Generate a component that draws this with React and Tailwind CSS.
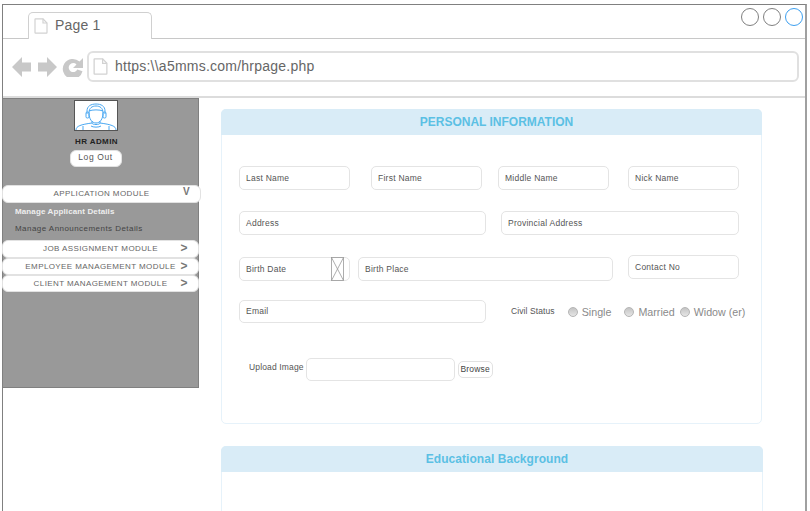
import React from 'react';

function PageIcon({ className }) {
  return (
    <svg className={className} viewBox="0 0 14 16" fill="none" stroke="#d2d2d2" strokeWidth="1.2">
      <path d="M1 1.2c0-.2.2-.4.4-.4H9L13 5v9.6c0 .3-.2.6-.5.6H1.500c-.3 0-.5-.3-.5-.6z" />
      <path d="M9 .8V5h4" />
    </svg>
  );
}

function Avatar() {
  return (
    <svg className="h-full w-full" viewBox="0 0 42 29" fill="none" stroke="#4aa8f2" strokeWidth="1">
      <path d="M14 12c0-5 3-7 7-7s7 2 7 7c0 6-3 10-7 10s-7-4-7-10z" />
      <path d="M14 10c3-1.500 11-1.500 14 0" />
      <path d="M12 13v-3c0-5 4-7 9-7s9 2 9 7v3" />
      <rect x="11" y="11" width="3" height="6" rx="1.200" />
      <rect x="28" y="11" width="3" height="6" rx="1.200" />
      <path d="M17 20v2c0 2 8 2 8 0v-2" />
      <path d="M1 29c0-4 5-5.500 16-7M41 29c0-4-5-5.500-16-7" />
      <path d="M8 29v-4M34 29v-4M16 25c2 1.500 8 1.500 10 0" />
    </svg>
  );
}

function Field({ label, className }) {
  return (
    <div className={`flex items-center rounded-[5px] border border-[#e4e4e4] bg-white pl-[6px] text-[8.500px] tracking-[0.25px] text-[#555] ${className}`}>
      {label}
    </div>
  );
}

function ModuleRow({ label, mark, markClass, className }) {
  return (
    <div className={`relative -ml-px flex items-center justify-center rounded-[6px] border border-[#e2e2e2] bg-white text-[8px] tracking-[0.4px] text-[#666] ${className}`}>
      {label}
      <span className={`absolute font-bold text-[#777] ${markClass}`}>{mark}</span>
    </div>
  );
}

function Radio({ label, className }) {
  return (
    <div className={`flex items-center ${className}`}>
      <span className="mr-[4px] h-[10px] w-[10px] rounded-full border border-[#b5b5b5] bg-gradient-to-b from-[#c4c4c4] to-[#e6e6e6]" />
      <span className="mt-px text-[10.700px] leading-[13px] text-[#8a8a8a]">{label}</span>
    </div>
  );
}

export default function App() {
  return (
    <div className="h-[511px] w-[810px] overflow-hidden bg-white pl-[2px] pt-[4px] font-['Liberation_Sans',Arial,sans-serif]">
      <div className="h-[520px] w-[805px] border-x border-t border-r-2 border-[#808080] border-r-[#a0a0a0] bg-white">
        {/* tab bar */}
        <div className="relative flex h-[34px] items-end border-b border-[#c8c8c8] pl-[25px]">
          <div className="-mb-px flex h-[27px] w-[124px] items-center rounded-t-[5px] border border-b-0 border-[#d0d0d0] bg-white pl-[5px]">
            <PageIcon className="h-4 w-[14px]" />
            <span className="mb-[2px] ml-[7px] text-[14px] tracking-[0.2px] text-[#666]">Page 1</span>
          </div>
          <div className="absolute right-[2px] top-[3px] flex gap-[4px]">
            <span className="h-[18px] w-[18px] rounded-full border border-[#808080]" />
            <span className="h-[18px] w-[18px] rounded-full border border-[#808080]" />
            <span className="h-[18px] w-[18px] rounded-full border border-[#3d9fef]" />
          </div>
        </div>

        {/* address bar */}
        <div className="flex h-[59px] items-center border-b-2 border-[#dcdcdc] pb-[2px] pl-[9px]">
          <svg className="h-5 w-[72px]" viewBox="0 0 72 20" fill="#c8c8c8">
            <path d="M0 10 10 0v5.500h9v9h-9V20z" />
            <path d="M45 10 35 0v5.500h-9v9h9V20z" />
            <path d="M71 1v10h-10l3.500-3.500a4.500 4.500 0 1 0 .8 5l5.200 1.800A10 10 0 1 1 67.500 4.500z" />
          </svg>
          <div className="ml-[3px] flex h-[31px] w-[712px] items-center rounded-[6px] border-2 border-[#e0e0e0] pl-[4px]">
            <PageIcon className="h-[17px] w-[15px]" />
            <span className="ml-[7px] text-[14px] tracking-[0.23px] text-[#666]">https:\\a5mms.com/hrpage.php</span>
          </div>
        </div>

        <div className="flex">
          {/* sidebar */}
          <aside className="h-[290px] w-[196px] shrink-0 border-y border-r border-[#808080] bg-[#999]">
            <div className="flex flex-col items-center">
              <div className="ml-[-10px] mt-[1px] h-[31px] w-[44px] border border-[#555] bg-white">
                <Avatar />
              </div>
              <div className="ml-[-8px] mt-[5px] text-[8px] font-bold tracking-[0.4px] text-[#222]">HR ADMIN</div>
              <div className="ml-[-10px] mt-[2px] flex h-[17px] w-[52px] items-center justify-center rounded-[6px] border border-[#e2e2e2] bg-white pb-[2px] text-[8.500px] tracking-[0.6px] text-[#555]">
                Log Out
              </div>
            </div>
            <ModuleRow label="APPLICATION MODULE" mark="V" markClass="right-[10px] top-[-2px] text-[10px]" className="mt-[18px] h-[18px] w-[199px]" />
            <div className="mt-[4px] pl-[12px] text-[8px] font-bold leading-[10px] tracking-[0.12px] text-[#eee]">Manage Applicant Details</div>
            <div className="mt-[7px] pl-[12px] text-[8px] leading-[10px] tracking-[0.45px] text-[#444]">Manage Announcements Details</div>
            <ModuleRow label="JOB ASSIGNMENT MODULE" mark=">" markClass="right-[10px] top-[-2px] text-[12px]" className="mt-[6px] h-[18px] w-[197px]" />
            <ModuleRow label="EMPLOYEE MANAGEMENT MODULE" mark=">" markClass="right-[10px] top-[-2px] text-[12px]" className="h-[17px] w-[197px]" />
            <ModuleRow label="CLIENT MANAGEMENT MODULE" mark=">" markClass="right-[10px] top-[-2px] text-[12px]" className="h-[17px] w-[197px]" />
          </aside>

          {/* main content */}
          <main className="ml-[22px] flex w-[542px] flex-col pt-[11px]">
            <section className="h-[315px] w-[541px] rounded-[5px] border border-[#e6f2fa]">
              <div className="-m-px flex h-[26px] items-center justify-center rounded-t-[5px] bg-[#d9ecf7] pl-[10px] text-[12px] font-bold text-[#5bc0e4]">
                PERSONAL INFORMATION
              </div>
              <div className="pl-[17px] pt-[32px]">
                <div className="flex">
                  <Field label="Last Name" className="h-6 w-[111px]" />
                  <Field label="First Name" className="ml-[21px] h-6 w-[111px]" />
                  <Field label="Middle Name" className="ml-[16px] h-6 w-[111px]" />
                  <Field label="Nick Name" className="ml-[19px] h-6 w-[111px]" />
                </div>
                <div className="mt-[21px] flex">
                  <Field label="Address" className="h-6 w-[247px]" />
                  <Field label="Provincial Address" className="ml-[15px] h-6 w-[238px]" />
                </div>
                <div className="mt-[22px] flex items-start">
                  <div className="relative">
                    <Field label="Birth Date" className="h-6 w-[111px]" />
                    <svg className="absolute left-[92px] top-0 h-6 w-[13px]" viewBox="0 0 13 24" fill="none" stroke="#999" strokeWidth="0.8">
                      <rect x="0.500" y="0.500" width="12" height="23" />
                      <path d="M0.500 0.500 12.500 23.500M12.500 0.500 0.500 23.500" />
                    </svg>
                  </div>
                  <Field label="Birth Place" className="ml-[8px] h-6 w-[255px]" />
                  <Field label="Contact No" className="-mt-[2px] ml-[15px] h-6 w-[111px]" />
                </div>
                <div className="mt-[19px] flex items-center">
                  <Field label="Email" className="h-[23px] w-[247px]" />
                  <span className="ml-[25px] text-[8.500px] tracking-[0.1px] text-[#555]">Civil Status</span>
                  <Radio label="Single" className="ml-[13px]" />
                  <Radio label="Married" className="ml-[13px]" />
                  <Radio label="Widow (er)" className="ml-[5px]" />
                </div>
                <div className="ml-[10px] mt-[35px] flex items-start">
                  <span className="mt-[3px] text-[8.500px] tracking-[0.15px] text-[#555]">Upload Image</span>
                  <div className="ml-[2px] h-[23px] w-[149px] rounded-[5px] border border-[#e4e4e4]" />
                  <div className="ml-[3px] mt-[3px] flex h-[17px] w-[35px] items-center justify-center rounded-[5px] border border-[#e2e2e2] text-[8.500px] tracking-[0.2px] text-[#444]">
                    Browse
                  </div>
                </div>
              </div>
            </section>

            <section className="mt-[22px] h-[120px] w-[542px] rounded-t-[5px] border border-[#e6f2fa]">
              <div className="-m-px flex h-[26px] items-center justify-center rounded-t-[5px] bg-[#d9ecf7] pl-[10px] text-[12px] font-bold tracking-[0.05px] text-[#5bc0e4]">
                Educational Background
              </div>
            </section>
          </main>
        </div>
      </div>
    </div>
  );
}
